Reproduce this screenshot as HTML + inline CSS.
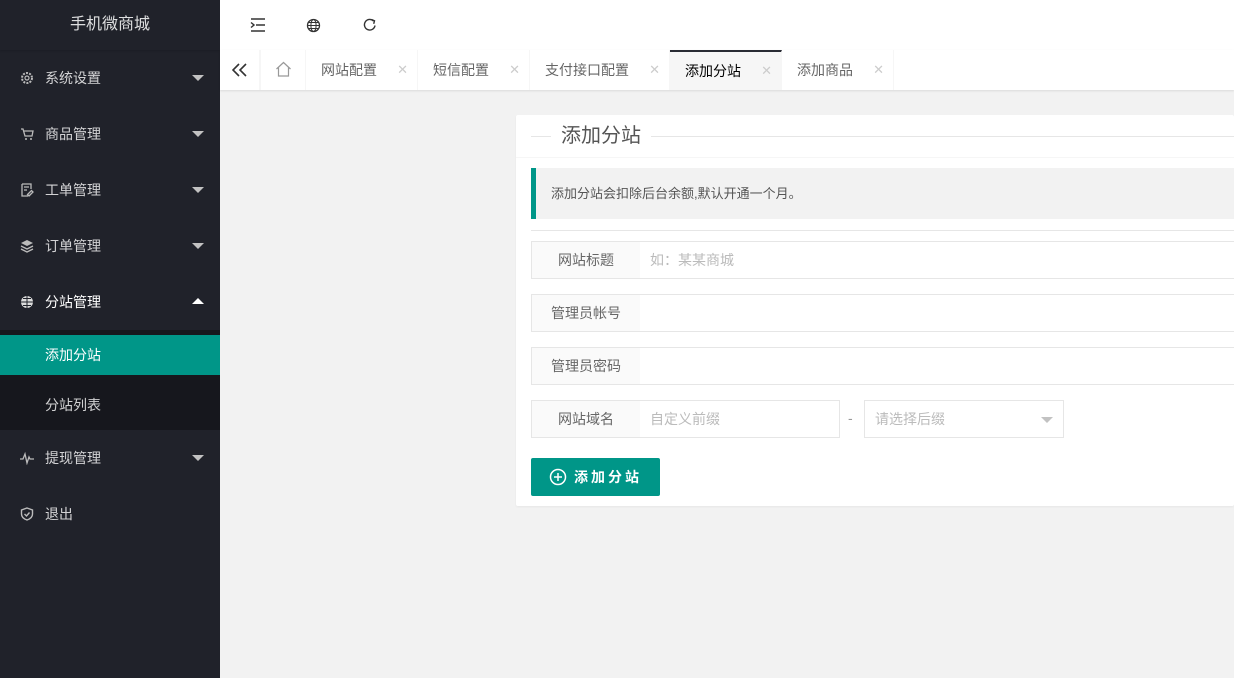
<!DOCTYPE html>
<html><head><meta charset="utf-8"><style>
*{box-sizing:border-box;margin:0;padding:0}
body{width:1234px;height:678px;overflow:hidden;background:#f2f2f2;font-family:"Liberation Sans","Noto Sans CJK SC",sans-serif;font-size:14px;color:#333;position:relative}
.side{position:absolute;left:0;top:0;width:220px;height:678px;background:#20222a;color:#fff}
.logo{height:50px;line-height:50px;text-align:center;font-size:16px;color:rgba(255,255,255,.85);box-shadow:0 1px 2px 0 rgba(0,0,0,.15)}
.mi{position:absolute;left:0;width:220px;height:56px;line-height:56px;color:rgba(255,255,255,.8);font-size:14px;padding-left:45px}
.mi svg{position:absolute;left:20px;top:21px}
.arr{position:absolute;right:16px;top:25px;width:0;height:0;border-left:6px solid transparent;border-right:6px solid transparent;border-top:6px solid #c2c2c2}
.arr.up{border-top:0;border-bottom:6px solid #fff;top:24px}
.sub{position:absolute;left:0;top:330px;width:220px;height:100px;background:rgba(0,0,0,.3)}
.sub div{position:absolute;left:0;width:220px;padding-left:45px;color:rgba(255,255,255,.8)}
.hdr{position:absolute;left:220px;top:0;right:0;height:50px;background:#fff}
.tabs{position:absolute;left:220px;top:50px;right:0;height:40px;background:#fff;box-shadow:0 1px 2px 0 rgba(0,0,0,.1)}
.tab{position:absolute;top:0;height:40px;line-height:40px;border-right:1px solid #f6f6f6;font-size:14px;color:#666;padding-left:15px}
.tab .x{position:absolute;right:9px;top:0;color:#ccc;font-size:13px}
.card{position:absolute;left:516px;top:115px;width:718px;height:391px;background:#fff;border-radius:2px;box-shadow:0 1px 2px 0 rgba(0,0,0,.05)}
.abs{position:absolute}
.lab{position:absolute;left:531px;width:110px;height:38px;line-height:36px;text-align:center;background:#fafafa;border:1px solid #e6e6e6;color:#666;font-size:14px}
.inp{position:absolute;left:640px;height:38px;line-height:36px;border:1px solid #e6e6e6;border-left:0;background:#fff;color:#bbb;padding-left:10px;font-size:14px}
</style></head><body>
<div class="side">
<div class="logo">手机微商城</div>
<div class="mi" style="top:50px"><svg width="14" height="14" viewBox="0 0 14 14"><circle cx="7" cy="7" r="5" fill="none" stroke="#bbb" stroke-width="2" stroke-dasharray="2 1.2"/><circle cx="7" cy="7" r="2" fill="none" stroke="#bbb" stroke-width="1.2"/></svg>系统设置<span class="arr"></span></div>
<div class="mi" style="top:106px"><svg width="14" height="14" viewBox="0 0 14 14"><path d="M1 2h2l2 7h7l1-5H4" fill="none" stroke="#bbb" stroke-width="1.3"/><circle cx="6" cy="12" r="1" fill="#bbb"/><circle cx="11" cy="12" r="1" fill="#bbb"/></svg>商品管理<span class="arr"></span></div>
<div class="mi" style="top:162px"><svg width="14" height="14" viewBox="0 0 14 14"><path d="M2 1h9v5M2 1v12h6M4 4h5M4 7h3M9 13l4-4-1.5-1.5-4 4z" fill="none" stroke="#bbb" stroke-width="1.3"/></svg>工单管理<span class="arr"></span></div>
<div class="mi" style="top:218px"><svg width="14" height="14" viewBox="0 0 14 14"><path d="M7 1l6 3-6 3-6-3z" fill="#bbb"/><path d="M1 7l6 3 6-3M1 10l6 3 6-3" fill="none" stroke="#bbb" stroke-width="1.3"/></svg>订单管理<span class="arr"></span></div>
<div class="mi" style="top:274px;color:#fff"><svg width="14" height="14" viewBox="0 0 14 14"><circle cx="7" cy="7" r="6" fill="#ddd"/><path d="M1 7h12M7 1v12M3 3.5h8M3 10.5h8" stroke="#20222a" stroke-width="1"/></svg>分站管理<span class="arr up"></span></div>
<div class="sub">
<div style="top:5px;height:40px;line-height:40px;background:#009688;color:#fff">添加分站</div>
<div style="top:50px;height:50px;line-height:50px">分站列表</div>
</div>
<div class="mi" style="top:430px"><svg width="14" height="14" viewBox="0 0 14 14"><path d="M0 8h3l2-5 2 9 2-6 1 2h4" fill="none" stroke="#bbb" stroke-width="1.3"/></svg>提现管理<span class="arr"></span></div>
<div class="mi" style="top:486px"><svg width="14" height="14" viewBox="0 0 14 14"><path d="M7 1l5.5 2v4c0 3-2.5 5-5.5 6C4 12 1.5 10 1.5 7V3z" fill="none" stroke="#bbb" stroke-width="1.4"/><path d="M4.5 7l2 2 3-3.5" fill="none" stroke="#bbb" stroke-width="1.4"/></svg>退出</div>
</div>
<div class="hdr">
<svg class="abs" style="left:30px;top:18px" width="16" height="14" viewBox="0 0 16 14"><path d="M1 1h14M6 7h9M1 13h14" stroke="#333" stroke-width="1.6"/><path d="M1 4.5l3 2.5-3 2.5" fill="none" stroke="#333" stroke-width="1.4"/></svg>
<svg class="abs" style="left:86px;top:18px" width="15" height="15" viewBox="0 0 15 15"><circle cx="7.5" cy="7.5" r="6" fill="none" stroke="#333" stroke-width="1.3"/><ellipse cx="7.5" cy="7.5" rx="2.6" ry="6" fill="none" stroke="#333" stroke-width="1"/><path d="M1.5 7.5h12M2.5 4.5h10M2.5 10.5h10" stroke="#333" stroke-width="1"/></svg>
<svg class="abs" style="left:142px;top:17px" width="16" height="16" viewBox="0 0 16 16"><path d="M13 8.5A5.3 5.3 0 1 1 11.5 4" fill="none" stroke="#333" stroke-width="1.4"/><path d="M9.5 2.5l3 1.3-.8 3" fill="none" stroke="#333" stroke-width="1.4"/></svg>
</div>
<div class="tabs">
<div class="tab" style="left:0;width:40px;padding:0"><svg class="abs" style="left:12px;top:13px" width="16" height="14" viewBox="0 0 16 14"><path d="M7 1L1 7l6 6M14 1L8 7l6 6" fill="none" stroke="#333" stroke-width="1.6"/></svg></div>
<div class="tab" style="left:40px;width:46px;padding:0;border-left:1px solid #f6f6f6"><svg class="abs" style="left:14px;top:11px" width="17" height="16" viewBox="0 0 17 16"><path d="M1.5 8L8.5 1.5 15.5 8M3.5 6.5V15h10V6.5" fill="none" stroke="#999" stroke-width="1.2"/></svg></div>
<div class="tab" style="left:86px;width:112px">网站配置<span class="x">✕</span></div>
<div class="tab" style="left:198px;width:112px">短信配置<span class="x">✕</span></div>
<div class="tab" style="left:310px;width:140px">支付接口配置<span class="x">✕</span></div>
<div class="tab" style="left:450px;width:112px;background:#f6f6f6;color:#000;border-top:2px solid #292b34;line-height:38px">添加分站<span class="x" style="line-height:38px">✕</span></div>
<div class="tab" style="left:562px;width:112px">添加商品<span class="x">✕</span></div>
</div>
<div class="card"></div>
<div class="abs" style="left:531px;top:136px;width:20px;border-top:1px solid #e6e6e6"></div>
<div class="abs" style="left:561px;top:123px;font-size:20px;color:#555;line-height:26px">添加分站</div>
<div class="abs" style="left:651px;top:136px;width:583px;border-top:1px solid #e6e6e6"></div>
<div class="abs" style="left:516px;top:157px;width:718px;border-top:1px solid #f6f6f6"></div>
<div class="abs" style="left:531px;top:168px;width:703px;height:51px;background:#f2f2f2;border-left:5px solid #009688;line-height:51px;padding-left:15px;font-size:13px;color:#555">添加分站会扣除后台余额,默认开通一个月。</div>
<div class="abs" style="left:531px;top:230px;width:703px;border-top:1px solid #e6e6e6"></div>
<div class="lab" style="top:241px">网站标题</div><div class="inp" style="top:241px;width:600px">如：某某商城</div>
<div class="lab" style="top:294px">管理员帐号</div><div class="inp" style="top:294px;width:600px"></div>
<div class="lab" style="top:347px">管理员密码</div><div class="inp" style="top:347px;width:600px"></div>
<div class="lab" style="top:400px">网站域名</div><div class="inp" style="top:400px;width:200px">自定义前缀</div>
<div class="abs" style="left:848px;top:410px;color:#999">-</div>
<div class="inp" style="left:864px;top:400px;width:200px;border-left:1px solid #e6e6e6">请选择后缀<span class="abs" style="right:10px;top:16px;border-left:6px solid transparent;border-right:6px solid transparent;border-top:6px solid #c2c2c2"></span></div>
<div class="abs" style="left:531px;top:458px;width:129px;height:38px;background:#009688;color:#fff;border-radius:2px;line-height:38px;font-size:14px;font-weight:bold;letter-spacing:3px;padding-left:43px">添加分站</div>
<svg class="abs" style="left:549px;top:468px" width="18" height="18" viewBox="0 0 18 18"><circle cx="9" cy="9" r="7.5" fill="none" stroke="#fff" stroke-width="1.5"/><path d="M9 5v8M5 9h8" stroke="#fff" stroke-width="1.5"/></svg>
</body></html>
